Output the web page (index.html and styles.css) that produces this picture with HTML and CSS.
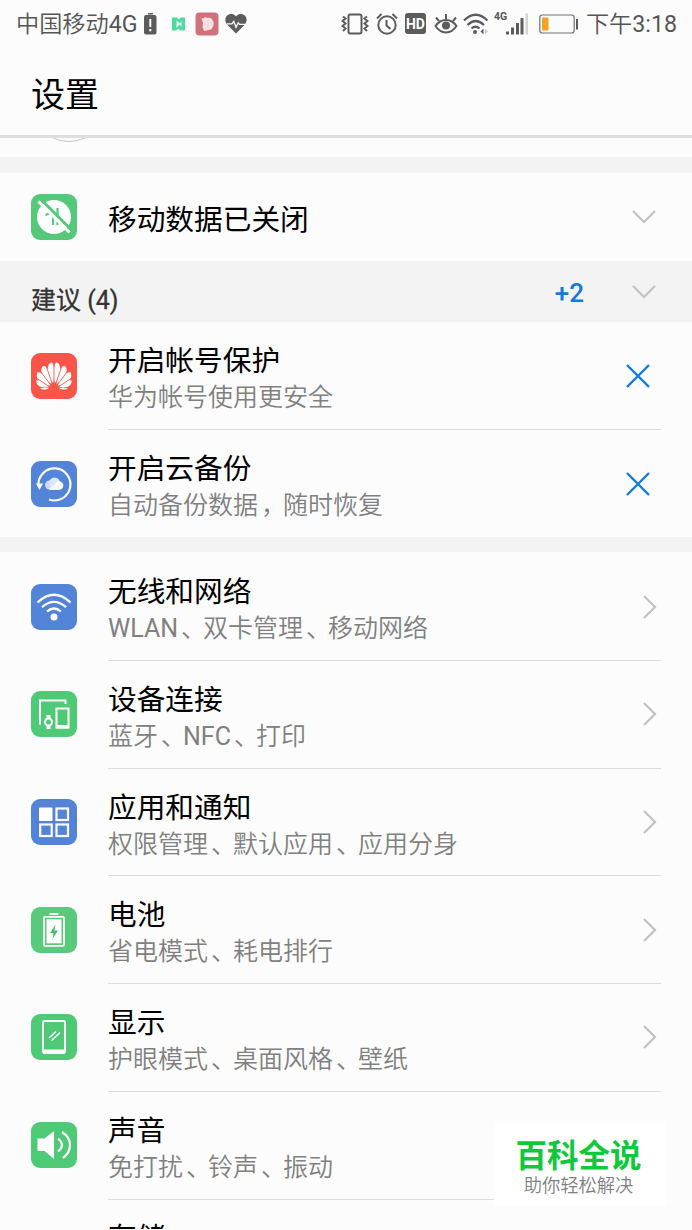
FILE: index.html
```html
<!DOCTYPE html>
<html lang="zh-CN">
<head>
    <meta charset="UTF-8">
    <title>设置</title>
    <link rel="stylesheet" href="styles.css">
</head>
<body>
    <div class="status">
        <span class="carrier">中国移动<span class="en">4G</span></span>
        <svg class="s-low" width="13" height="22" viewBox="0 0 13 22"><path d="M4 0h5v1.5H4z" fill="#5c5c5c"/><rect x="0" y="2" width="12.5" height="19.5" rx="2" fill="#5c5c5c"/><path d="M6.300 6v8M6.300 16v2.200" stroke="#fff" stroke-width="2"/></svg>
        <svg class="s-n" width="13" height="14" viewBox="0 0 13 14"><path d="M0 .5h5l2 2l1.500-2H13v13H8l-2-2l-1.500 2H0z" fill="#4fd9a0"/><path d="M4.500 3.500L8.500 7l-4 3.500zM9.500 4v6L7.500 7z" fill="#e4fbf1"/></svg>
        <svg class="s-red" width="24" height="24" viewBox="0 0 24 24"><rect x=".5" y=".5" width="23" height="23" rx="4" fill="#d0717b"/><path d="M6.500 6l2 .5l2-1.500l2 1l2-.5c5 2 5.500 8 1.500 12l-7 1.500l-1.500-4l.5-4z" fill="#f6e3e2"/><path d="M10 9l1 6M13 8v8" stroke="#ecd0d0" stroke-width=".8"/></svg>
        <svg class="s-heart" width="22" height="20" viewBox="0 0 22 20"><path d="M11 19.500L2.500 11C-4 3 6-4 11 2.500C16-4 26 3 19.500 11z" fill="#5c5c5c"/><path d="M2 9.800h5l1.800-2.500l2.200 6l2.200-4.500l1.300 1.500H20" fill="none" stroke="#fff" stroke-width="1.300"/></svg>
        <div class="status-right">
            <svg class="s-vib" width="28" height="22" viewBox="0 0 28 22" fill="none" stroke="#5c5c5c"><rect x="7.500" y="1.500" width="13" height="19" rx="2" stroke-width="2"/><path d="M2 3.500l2.500 2L1.500 8l3 2.500l-3 2.500l3 2.500L2 18M26 3.500l-2.500 2l3 2.500l-3 2.500l3 2.500l-3 2.500L26 18" stroke-width="2"/></svg>
            <svg class="s-alarm" width="22" height="22" viewBox="0 0 22 22" fill="none" stroke="#5c5c5c" stroke-width="2"><circle cx="11" cy="12" r="8.700"/><path d="M1 5.500L5.500 1M21 5.500L16.500 1M10.500 7v5.500l4 3.500"/></svg>
            <span class="hd">HD</span>
            <svg class="s-eye" width="24" height="22" viewBox="0 0 24 22" fill="none" stroke="#5c5c5c" stroke-width="2"><path d="M1.500 13C7 5 17 5 22.500 13C17 21.500 7 21.500 1.500 13z"/><circle cx="12" cy="12.500" r="4" fill="#5c5c5c" stroke="none"/><path d="M12 6V1M5 8L2 4.500M19 8l3-3.500"/></svg>
            <svg class="s-wifi" width="26" height="22" viewBox="0 0 26 22" fill="none" stroke="#5c5c5c" stroke-width="2.200"><path d="M1 7.500Q12.500-4 24.500 7.500M4.500 12Q12.500 4 21 12M8.500 15.500Q12.500 12 16.500 15.500"/><circle cx="12" cy="19" r="2" fill="#5c5c5c" stroke="none"/><path d="M20.500 15.500v6l-3-3z" fill="#5c5c5c" stroke="none"/><path d="M22 15.500v6l3-3z" fill="#ccc" stroke="none"/></svg>
            <span class="net">4G</span>
            <svg class="s-sig" width="24" height="22" viewBox="0 0 24 22"><path d="M0 18.500h3v3H0zM5 14.500h3v7H5zM10 10h3v11.500h-3zM14.500 5h3v16.500h-3z" fill="#5c5c5c"/><path d="M19.500.5h2.500v21h-2.500z" fill="#d4d4d4"/></svg>
            <svg class="s-bat" width="40" height="20" viewBox="0 0 40 20"><rect x=".8" y="1" width="34.400" height="18" rx="2.500" fill="none" stroke="#6e6e6e" stroke-width="1.200"/><rect x="3" y="3.500" width="6.500" height="13" fill="#f5a122"/><path d="M37 5h2v10.500h-2z" fill="#5c5c5c"/></svg>
            <span class="time">下午<span class="en">3:18</span></span>
        </div>
    </div>

    <h1 class="title">设置</h1>
    <div class="peek">
        <svg width="46" height="6" viewBox="0 0 46 6"><path d="M7 0Q23 7 39 0" fill="none" stroke="#c8c8c8"/></svg>
    </div>
    <div class="band"></div>

    <div class="row single">
        <svg class="icon" viewBox="0 0 46 46"><rect width="46" height="46" rx="9" fill="#55c87a"/><circle cx="23" cy="23" r="17" fill="#fff"/><path d="M14.500 21l4-1.500M22 22v9M26.500 14v9M26.500 28v3" fill="none" stroke="#55c87a" stroke-width="2.200"/><path d="M10 5.500L40.500 36" stroke="#55c87a" stroke-width="3"/><path d="M7.500 7.500L38.500 38.500" stroke="#fff" stroke-width="2.800"/></svg>
        <div class="text"><div class="name">移动数据已关闭</div></div>
        <svg class="down" viewBox="0 0 26 16"><path d="M2 2l11 11L24 2"/></svg>
    </div>

    <div class="suggest">
        <span class="label">建议 (4)</span>
        <span class="more">+2</span>
        <svg class="down" viewBox="0 0 26 16"><path d="M2 2l11 11L24 2"/></svg>
    </div>

    <div class="row">
        <svg class="icon" viewBox="0 0 46 46"><rect width="46" height="46" rx="9" fill="#fb5549"/>
            <g fill="#fff">
                <path d="M22.300 30C17 25 14 11 20.500 9.500C24 10.500 23.500 25 22.300 30z"/>
                <path d="M20.800 31C12 26.500 7.500 18 12 13C18 12.500 20.500 25 20.800 31z"/>
                <path d="M19.300 32.500C10 33 3.500 26.500 6.500 19C12.500 19 17.500 27.500 19.300 32.500z"/>
                <path d="M18 34C10.500 35.500 5.500 33.500 5.200 27.300C10 27.500 15 31 18 34z"/>
                <path d="M18 34.700c-1.500 2-6.500 2.500-9 .5z"/>
                <path d="M23.700 30C29 25 32 11 25.500 9.500C22 10.500 22.500 25 23.700 30z"/>
                <path d="M25.200 31C34 26.500 38.500 18 34 13C28 12.500 25.500 25 25.200 31z"/>
                <path d="M26.700 32.500C36 33 42.500 26.500 39.500 19C33.500 19 28.500 27.500 26.700 32.500z"/>
                <path d="M28 34C35.500 35.500 40.500 33.500 40.800 27.300C36 27.500 31 31 28 34z"/>
                <path d="M28 34.700c1.500 2 6.500 2.500 9 .5z"/>
            </g>
            <path d="M23 33V12M22 33L15.500 14M24 33L30.500 14M20.500 33L8.500 17M25.500 33L37.500 17M19 34L6 25.500M27 34L40 25.500" stroke="#fb5549" stroke-width=".9"/></svg>
        <div class="text"><div class="name">开启帐号保护</div><div class="desc">华为帐号使用更安全</div></div>
        <svg class="close" viewBox="0 0 26 26"><path d="M2 2l22 22M24 2L2 24"/></svg>
    </div>
    <div class="row last">
        <svg class="icon" viewBox="0 0 46 46"><rect width="46" height="46" rx="9" fill="#5484d8"/><path d="M7.500 25A16 16 0 1 1 18 38.500" fill="none" stroke="#fff" stroke-width="2.200"/><path d="M5 22.500h7L8.500 29z" fill="#fff"/><circle cx="18.500" cy="24" r="4.500" fill="#c9d9f7"/><circle cx="23.500" cy="22" r="5.500" fill="#dce7fb"/><circle cx="28" cy="24.500" r="4.300" fill="#fff"/><path d="M18 28.500q5-6 10-5v5.500H19z" fill="#f3f7ff"/></svg>
        <div class="text"><div class="name">开启云备份</div><div class="desc">自动备份数据<span class="p">，</span>随时恢复</div></div>
        <svg class="close" viewBox="0 0 26 26"><path d="M2 2l22 22M24 2L2 24"/></svg>
    </div>
    <div class="band"></div>

    <div class="list">
        <div class="row">
            <svg class="icon" viewBox="0 0 46 46"><rect width="46" height="46" rx="9" fill="#5484d8"/><g fill="none" stroke="#fff" stroke-width="2.300"><path d="M6.500 18.500Q23 3 39.500 18.500M11 23.200Q23 12.500 35 23.200M16 27.500Q23 21.500 30 27.500"/></g><circle cx="23" cy="33" r="3.500" fill="#fff"/></svg>
            <div class="text"><div class="name">无线和网络</div><div class="desc"><span class="en">WLAN</span><span class="p">、</span>双卡管理<span class="p">、</span>移动网络</div></div>
            <svg class="next" viewBox="0 0 16 26"><path d="M2 2l11 11L2 24"/></svg>
        </div>
        <div class="row">
            <svg class="icon" viewBox="0 0 46 46"><rect width="46" height="46" rx="9" fill="#4eca77"/><g fill="none" stroke="#fff" stroke-width="2"><path d="M9 33.500V9.500h25.500V13"/><rect x="25.500" y="17.500" width="12" height="19"/><circle cx="17.500" cy="31" r="3.500"/></g><path d="M25.500 34h12v3.500h-12zM15.500 24h4v3.500h-4zM15.500 34.500h4V38h-4z" fill="#fff"/></svg>
            <div class="text"><div class="name">设备连接</div><div class="desc">蓝牙<span class="p">、</span><span class="en">NFC</span><span class="p">、</span>打印</div></div>
            <svg class="next" viewBox="0 0 16 26"><path d="M2 2l11 11L2 24"/></svg>
        </div>
        <div class="row">
            <svg class="icon" viewBox="0 0 46 46"><rect width="46" height="46" rx="9" fill="#5484d8"/><rect x="8" y="8.500" width="13.500" height="13.500" rx="1" fill="#fff"/><g fill="none" stroke="#fff" stroke-width="2.200"><rect x="25.500" y="9.500" width="11.500" height="11.500"/><rect x="9.200" y="25.500" width="11.500" height="11.500"/><rect x="25.500" y="25.500" width="11.500" height="11.500"/></g></svg>
            <div class="text"><div class="name">应用和通知</div><div class="desc">权限管理<span class="p">、</span>默认应用<span class="p">、</span>应用分身</div></div>
            <svg class="next" viewBox="0 0 16 26"><path d="M2 2l11 11L2 24"/></svg>
        </div>
        <div class="row">
            <svg class="icon" viewBox="0 0 46 46"><rect width="46" height="46" rx="9" fill="#59c97b"/><path d="M18.500 6h9v2h-9z" fill="#fff"/><rect x="13" y="9.800" width="20" height="29" rx="1" fill="none" stroke="#fff" stroke-width="1.800"/><path d="M15.500 12.300h15v24h-15z" fill="#fff"/><path d="M24.500 17.500L19 26h3.500l-1 6l5.500-8.500h-3.500z" fill="#45bf6a"/></svg>
            <div class="text"><div class="name">电池</div><div class="desc">省电模式<span class="p">、</span>耗电排行</div></div>
            <svg class="next" viewBox="0 0 16 26"><path d="M2 2l11 11L2 24"/></svg>
        </div>
        <div class="row">
            <svg class="icon" viewBox="0 0 46 46"><rect width="46" height="46" rx="9" fill="#4eca77"/><rect x="12" y="7" width="22" height="32" rx="1.500" fill="none" stroke="#fff" stroke-width="1.900"/><path d="M12 35.500h22V40H12z" fill="#fff"/><path d="M18 24l7-6.500M20.500 26.500l8.500-8" stroke="#fff" stroke-width="1.500"/></svg>
            <div class="text"><div class="name">显示</div><div class="desc">护眼模式<span class="p">、</span>桌面风格<span class="p">、</span>壁纸</div></div>
            <svg class="next" viewBox="0 0 16 26"><path d="M2 2l11 11L2 24"/></svg>
        </div>
        <div class="row">
            <svg class="icon" viewBox="0 0 46 46"><rect width="46" height="46" rx="9" fill="#4eca77"/><path d="M6.500 16.500h7L23 9v28l-9.500-8h-7z" fill="#fff"/><path d="M27 16.500q8 6.500 0 13M31 10c11 7 10 19 1 26" fill="none" stroke="#fff" stroke-width="2.200"/></svg>
            <div class="text"><div class="name">声音</div><div class="desc">免打扰<span class="p">、</span>铃声<span class="p">、</span>振动</div></div>
        </div>
        <div class="row cut">
            <svg class="icon" viewBox="0 0 46 46"><rect width="46" height="46" rx="9" fill="#b5b5b5"/></svg>
            <div class="text"><div class="name">存储</div></div>
        </div>
    </div>

    <div class="mark">
        <div class="mark-name">百科全说</div>
        <div class="mark-sub">助你轻松解决</div>
    </div>
</body>
</html>
```
FILE: styles.css
```css
* { box-sizing: border-box; }
body {
    display: flex;
    flex-direction: column;
    margin: 0;
    width: 692px;
    height: 1230px;
    overflow: hidden;
    background: #fcfcfc;
    color: #000;
    font-family: Roboto, "Noto Sans CJK SC", sans-serif;
}
body > div, .title { flex: none; }
svg { display: block; flex: none; }
.en { font-weight: 400; }
.status {
    display: flex;
    align-items: center;
    height: 47px;
    padding: 0 15px 0 16px;
    font-size: 23.2px;
    font-weight: 350;
    color: #555;
    white-space: nowrap;
}
.carrier { width: 128px; }
.carrier, .time { margin-top: -4px; }
.s-n { margin-left: 15px; }
.s-red { margin-left: 10px; }
.s-heart { margin-left: 6px; }
.status-right {
    display: flex;
    align-items: center;
    margin-left: auto;
}
.s-alarm { margin-left: 7px; }
.hd {
    width: 21px;
    height: 21px;
    margin: 0 8px 0 7px;
    border-radius: 3px;
    background: #5c5c5c;
    color: #fff;
    font-size: 14px;
    font-weight: 700;
    line-height: 22px;
    text-align: center;
}
.s-wifi { margin-left: 5px; }
.net {
    width: 12px;
    margin: 0 0 13px 5px;
    font: 700 10.5px/12px Roboto, sans-serif;
}
.s-bat { margin: 0 7px 0 9px; }
.title {
    height: 91px;
    margin: 0;
    padding-left: 31px;
    border-bottom: 3px solid #dedede;
    font-size: 34px;
    font-weight: 400;
    line-height: 97px;
}
.peek {
    height: 19px;
    padding-left: 46px;
}
.band {
    height: 15.5px;
    background: #f3f3f3;
}
.row {
    position: relative;
    display: flex;
    align-items: center;
    height: 107.7px;
    padding: 1px 31px 0;
}
.row::after {
    content: "";
    position: absolute;
    left: 108px;
    right: 31px;
    bottom: -1px;
    height: 1px;
    background: #dcdcdc;
}
.row.single {
    height: 88px;
    padding-top: 0;
}
.row.single::after, .row.last::after { display: none; }
.icon {
    width: 46px;
    height: 46px;
}
.text {
    flex: 1;
    padding: 8px 0 0 31px;
    white-space: nowrap;
}
.single .text { padding-top: 6px; }
.name {
    font-size: 28.7px;
    line-height: 36px;
}
.desc {
    color: #808080;
    font-size: 25px;
    font-weight: 350;
    line-height: 37px;
}
.p {
    display: inline-block;
    width: 25px;
    text-indent: 3px;
}
.down, .next, .close {
    fill: none;
    stroke: #c2c2c2;
    stroke-width: 2.2;
}
.down {
    width: 26px;
    height: 16px;
    margin: 1px 4px 0 0;
}
.next {
    width: 16px;
    height: 26px;
    margin-right: 3px;
}
.close {
    width: 26px;
    height: 26px;
    margin-right: 10px;
    stroke: #0f7be0;
    stroke-width: 2.4;
}
.suggest {
    display: flex;
    align-items: center;
    height: 61px;
    padding: 0 31px;
    background: #f3f3f3;
}
.label {
    flex: 1;
    padding-top: 13px;
    color: #333;
    font-size: 25px;
    -webkit-text-stroke: .3px #333;
}
.more {
    margin: 3px 47px 0 0;
    color: #1478dc;
    font-size: 26px;
    font-weight: 500;
}
.list {
    height: 677px;
    overflow: hidden;
}
.cut {
    align-items: flex-start;
    padding-top: 30px;
}
.cut .text {
    padding-top: 0;
    margin-top: -9px;
}
.mark {
    position: absolute;
    left: 494px;
    top: 1121px;
    width: 173px;
    height: 84px;
    padding-top: 17px;
    background: #fff;
    text-align: center;
    white-space: nowrap;
}
.mark-name {
    padding-right: 4px;
    color: #0fc83c;
    font-size: 31.5px;
    font-weight: 700;
    line-height: 38px;
}
.mark-sub {
    padding-right: 4px;
    color: #808080;
    font-size: 18.3px;
    font-weight: 350;
    line-height: 20px;
}
```
